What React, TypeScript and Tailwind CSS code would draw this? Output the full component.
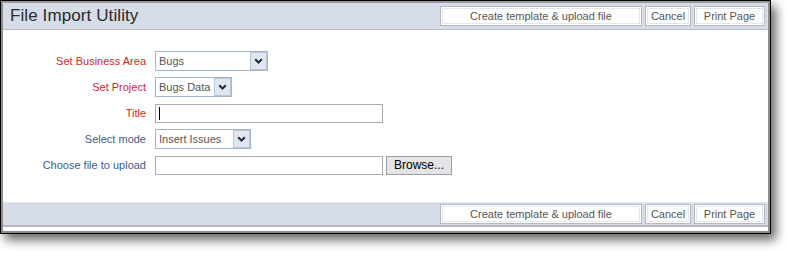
import React from 'react';

const font = { fontFamily: '"Liberation Sans", Arial, sans-serif' };

const Btn: React.FC<{ w: string; children: React.ReactNode }> = ({ w, children }) => (
  <div className={`${w} h-[20px] border border-[#b4b9c0] bg-white p-px`}>
    <div className="h-full border border-[#e4e6ea] flex items-center justify-center text-[11px] text-[#555] whitespace-nowrap">
      {children}
    </div>
  </div>
);

const Chevron = () => (
  <svg width="9" height="6" viewBox="0 0 9 6">
    <path d="M1.2 1.2 L4.5 4.5 L7.8 1.2" fill="none" stroke="#1d2a44" strokeWidth="2" />
  </svg>
);

const Select: React.FC<{ w: string; value: string }> = ({ w, value }) => (
  <div className={`${w} h-[20px] flex border border-[#a5b5cc] bg-white`}>
    <div className="flex-1 pl-[3px] text-[11px] text-[#555] leading-[18px] whitespace-nowrap">{value}</div>
    <div className="w-[17px] h-full border border-[#b9c6da] bg-[#e2e7ef] flex items-center justify-center">
      <Chevron />
    </div>
  </div>
);

const Row: React.FC<{ label: string; red?: boolean; children: React.ReactNode }> = ({ label, red, children }) => (
  <div className="flex items-center h-[20px]">
    <div className={`w-[142px] text-right text-[11px] whitespace-nowrap ${red ? 'text-[#d8262b]' : 'text-[#3d5c8c]'}`}>{label}</div>
    <div className="ml-[9px] flex items-center gap-[3px]">{children}</div>
  </div>
);

const Buttons = () => (
  <div className="flex gap-[3px]">
    <Btn w="w-[202px]">Create template &amp; upload file</Btn>
    <Btn w="w-[46px]">Cancel</Btn>
    <Btn w="w-[71px]">Print Page</Btn>
  </div>
);

export default function App() {
  return (
    <div className="w-[786px] h-[253px] bg-white" style={font}>
      <div className="w-[771px] h-[234px] border border-black bg-white shadow-[5px_6px_10px_rgba(0,0,0,0.6)]">
        <div className="h-full border-2 border-[#8c8c8c] border-t-[#9a9a9a] flex flex-col">
          {/* Header */}
          <div className="h-[27px] bg-[#d6dde8] border-b border-[#b9bec6] flex items-center justify-between pl-[7px] pr-[3px]">
            <div className="text-[17px] text-[#2a2a2a] tracking-[0.1px]">File Import Utility</div>
            <Buttons />
          </div>

          {/* Body */}
          <div className="flex-1 pt-[21px] pl-[1px] flex flex-col gap-[6px]">
            <Row label="Set Business Area" red>
              <Select w="w-[113px]" value="Bugs" />
            </Row>
            <Row label="Set Project" red>
              <Select w="w-[77px]" value="Bugs Data" />
            </Row>
            <Row label="Title" red>
              <div className="w-[228px] h-[19px] border border-[#a9adb3] bg-white flex items-center pl-[3px]">
                <div className="w-px h-[13px] bg-black" />
              </div>
            </Row>
            <Row label="Select mode">
              <Select w="w-[96px]" value="Insert Issues" />
            </Row>
            <Row label="Choose file to upload">
              <div className="w-[228px] h-[19px] border border-[#a9adb3] bg-white" />
              <div className="w-[66px] h-[19px] border border-[#9a9ea5] bg-[#e4e4e6] flex items-center justify-center text-[12px] text-black">
                Browse...
              </div>
            </Row>
          </div>

          {/* Footer */}
          <div className="h-[25px] bg-[#d6dde8] border-t border-[#e3e7ee] border-b-2 border-b-[#b4b8be] flex items-center justify-end pr-[3px]">
            <Buttons />
          </div>
          <div className="h-[4px] bg-white" />
        </div>
      </div>
    </div>
  );
}
